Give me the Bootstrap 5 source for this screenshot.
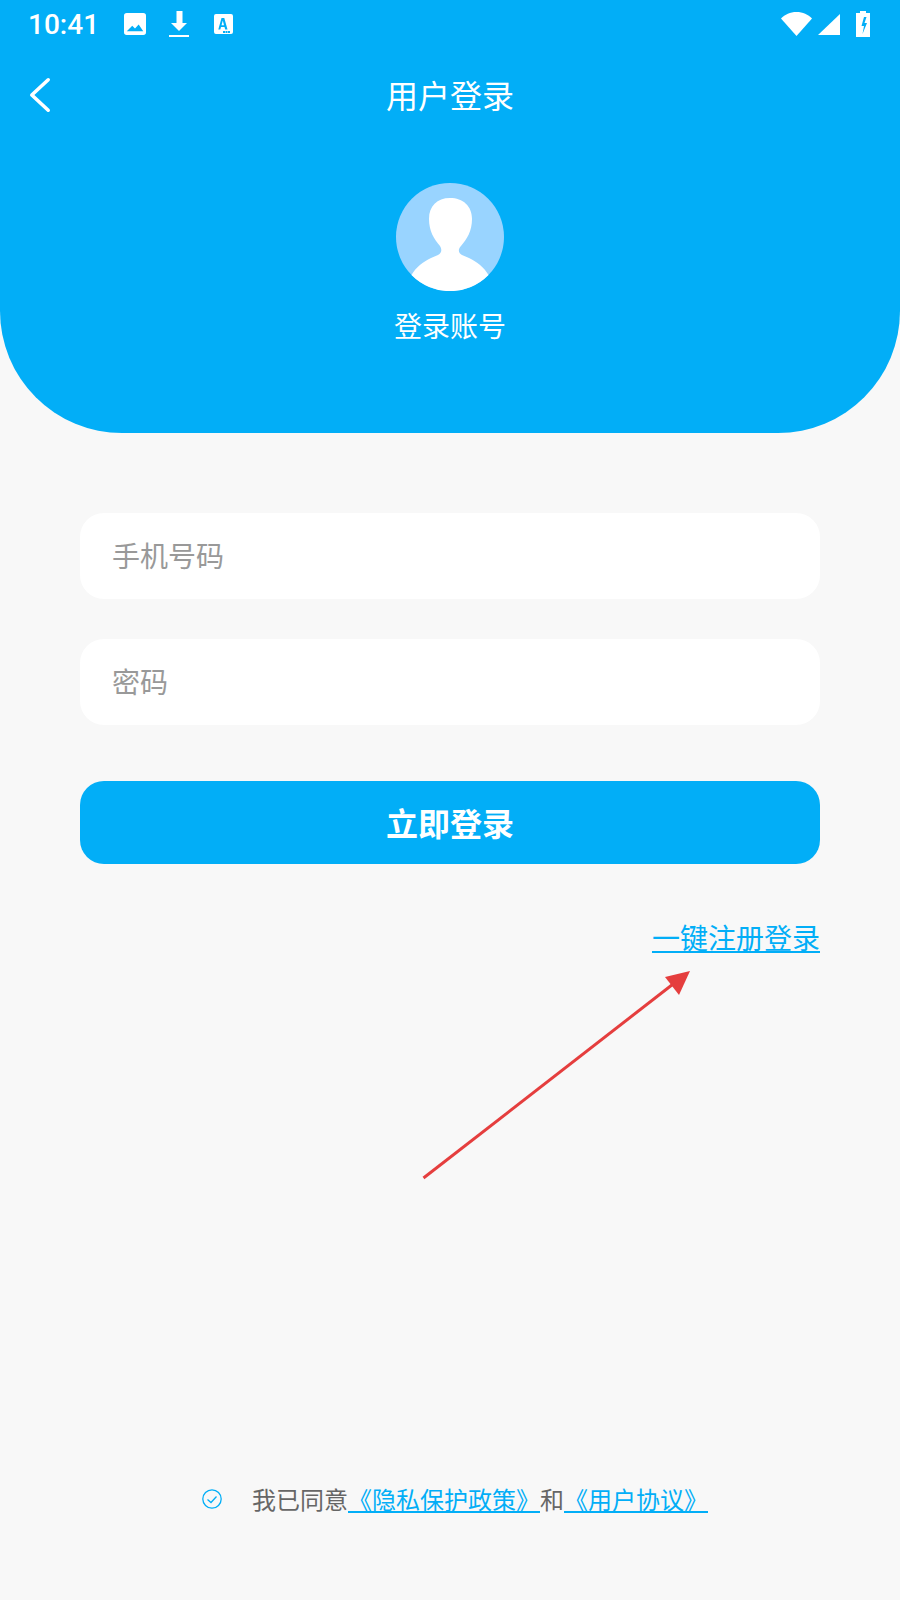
<!DOCTYPE html>
<html lang="zh-CN">
    <head>
        <meta charset="UTF-8">
        <title>用户登录</title>
        <link href="https://cdn.jsdelivr.net/npm/bootstrap@5.3.0/dist/css/bootstrap.min.css" rel="stylesheet">
        <style>
            body {
                background: #f8f8f8;
                font-family: "Noto Sans CJK SC", "Liberation Sans", sans-serif;
            }
            .login-page { position: relative; height: 1600px; overflow: hidden; }
            .login-head {
                height: 433px;
                background: #02aef7;
                color: #fff;
                border-radius: 0 0 122px 122px;
            }
            .status-row { height: 48px; padding: 0 30px 0 28px; }
            .status-time { font: 500 28px/1 Roboto, sans-serif; width: 69px; margin: 2px 27px 0 0; }
            .icon-pic { margin-right: 23px; }
            .icon-down { margin-right: 25px; }
            .icon-wifi { margin-right: 6px; }
            .icon-signal { margin-right: 16px; }
            .title-row { position: relative; height: 96px; margin-bottom: 39px; padding-bottom: 4px; }
            .title-row .back-link { position: absolute; left: 28px; top: 28px; line-height: 0; }
            .page-title { font-size: 32px; line-height: 1; margin: 0; font-weight: 400; }
            .avatar-pic { width: 108px; height: 108px; display: block; }
            .avatar-name { font-size: 28px; line-height: 1; margin-top: 20px; }
            .login-form { padding: 80px 80px 0; }
            .login-form .form-control {
                height: 86px;
                border: 0;
                border-radius: 24px;
                padding: 0 32px 2px;
                font-size: 28px;
                background: #fff;
            }
            .login-form .form-control::placeholder { color: #999; }
            .phone-input { margin-bottom: 40px; }
            .login-btn {
                display: block;
                width: 100%;
                height: 83px;
                margin-top: 56px;
                border: 0;
                border-radius: 24px;
                background: #02aef7;
                color: #fff;
                font-size: 32px;
                font-weight: 700;
                line-height: 1;
                padding: 0 0 2px;
            }
            .login-btn:hover { background: #02aef7; color: #fff; }
            .quick-link { color: #02aef7; font-size: 28px; line-height: 1; }
            .quick-row { margin-top: 59px; }
            .agree-row {
                position: absolute;
                left: 0;
                right: 0;
                bottom: 89px;
                font-size: 24px;
                line-height: 1;
                color: #666;
                padding-left: 10px;
            }
            .agree-row a { color: #02aef7; }
            .agree-check { margin-right: 30px; display: block; }
            .mark-arrow { position: absolute; left: 0; top: 0; pointer-events: none; }
        </style>
    </head>
    <body>
        <div class="login-page">
            <div class="login-head d-flex flex-column">
                <div class="status-row d-flex align-items-center">
                    <span class="status-time">10:41</span>
                    <svg class="icon-pic" width="22" height="22" viewBox="0 0 24 24"><path fill="#fff" fill-rule="evenodd" d="M3 0h18a3 3 0 0 1 3 3v18a3 3 0 0 1-3 3H3a3 3 0 0 1-3-3V3a3 3 0 0 1 3-3zM3 20h18l-5-7.500-4 4.500-3-3z"/></svg>
                    <svg class="icon-down" width="20" height="26" viewBox="0 0 20 26"><path fill="#fff" d="M7.500 0h6v12H18l-8 8-8-8h5.500zM0 24h20v2H0z"/></svg>
                    <svg width="19" height="20" viewBox="0 0 19 20"><path fill="#fff" fill-rule="evenodd" d="M2 0h15a2 2 0 0 1 2 2v16a2 2 0 0 1-2 2H2a2 2 0 0 1-2-2V2a2 2 0 0 1 2-2zM7.500 4 4.300 15.500h2l.7-2.500h3.500l.7 2.500h2.300L10.300 4zM8.800 6.500l1.200 4.700H7.500zM9 17v2h2v-2zM11.500 17v2h2v-2zM14 17v2h2v-2z"/></svg>
                    <svg class="ms-auto icon-wifi" width="31" height="24" viewBox="0 0 31 24"><path fill="#fff" d="M0 6.500C4 2.500 9 0 15.500 0S27 2.500 31 6.500L15.500 24z"/></svg>
                    <svg class="icon-signal" width="22" height="21" viewBox="0 0 22 21"><path fill="#fff" d="M22 0v21H0z"/></svg>
                    <svg width="14" height="26" viewBox="0 0 14 26"><path fill="#fff" fill-rule="evenodd" d="M4 0h6v2h4v24H0V2h4zM8 6 5.500 15H8l-1.500 8L11 12H8.500l2-6z"/></svg>
                </div>
                <div class="title-row d-flex align-items-center justify-content-center">
                    <a class="back-link" href="#" aria-label="返回">
                        <svg width="24" height="38" viewBox="0 0 24 38"><path fill="none" stroke="#fff" stroke-width="3.600" stroke-linecap="round" stroke-linejoin="round" d="M20.200 3.800 3.800 19l16.400 15.200"/></svg>
                    </a>
                    <h1 class="page-title">用户登录</h1>
                </div>
                <div class="d-flex flex-column align-items-center">
                    <svg class="avatar-pic" viewBox="0 0 108 108">
                        <circle cx="54" cy="54" r="54" fill="#99d4ff"/>
                        <path fill="#fff" d="M15.500 92C20 84 27 79 35 75L42 72C46 70 46 66 44 63C38 56 33 48 33 36C33 23 41 15 54 15S76 23 76 36C76 48 71 56 65 63C62 66 62 70 66 72L73 75C81 79 88 84 92.500 92A54 54 0 0 1 15.500 92z"/>
                    </svg>
                    <div class="avatar-name">登录账号</div>
                </div>
            </div>

            <form class="login-form">
                <input type="tel" class="form-control phone-input" placeholder="手机号码">
                <input type="password" class="form-control" placeholder="密码">
                <button type="button" class="btn login-btn">立即登录</button>
                <div class="quick-row text-end">
                    <a class="quick-link" href="#">一键注册登录</a>
                </div>
            </form>

            <svg class="mark-arrow" width="900" height="1600" viewBox="0 0 900 1600">
                <path stroke="#e53e3e" stroke-width="3" fill="none" d="M423.500 1178 677 981"/>
                <path fill="#e53e3e" d="M690 971 665 977 679 995z"/>
            </svg>

            <div class="agree-row d-flex align-items-center justify-content-center">
                <svg class="agree-check" width="20" height="20" viewBox="0 0 20 20"><circle cx="10" cy="10" r="9.200" fill="none" stroke="#02aef7" stroke-width="1.300"/><path fill="none" stroke="#02aef7" stroke-width="1.300" d="M5.500 10.500 9 13.500l5.500-6"/></svg>
                <span>我已同意<a href="#">《隐私保护政策》</a>和<a href="#">《用户协议》</a></span>
            </div>
        </div>

        <script src="https://cdn.jsdelivr.net/npm/bootstrap@5.3.0/dist/js/bootstrap.bundle.min.js"></script>
    </body>
</html>
